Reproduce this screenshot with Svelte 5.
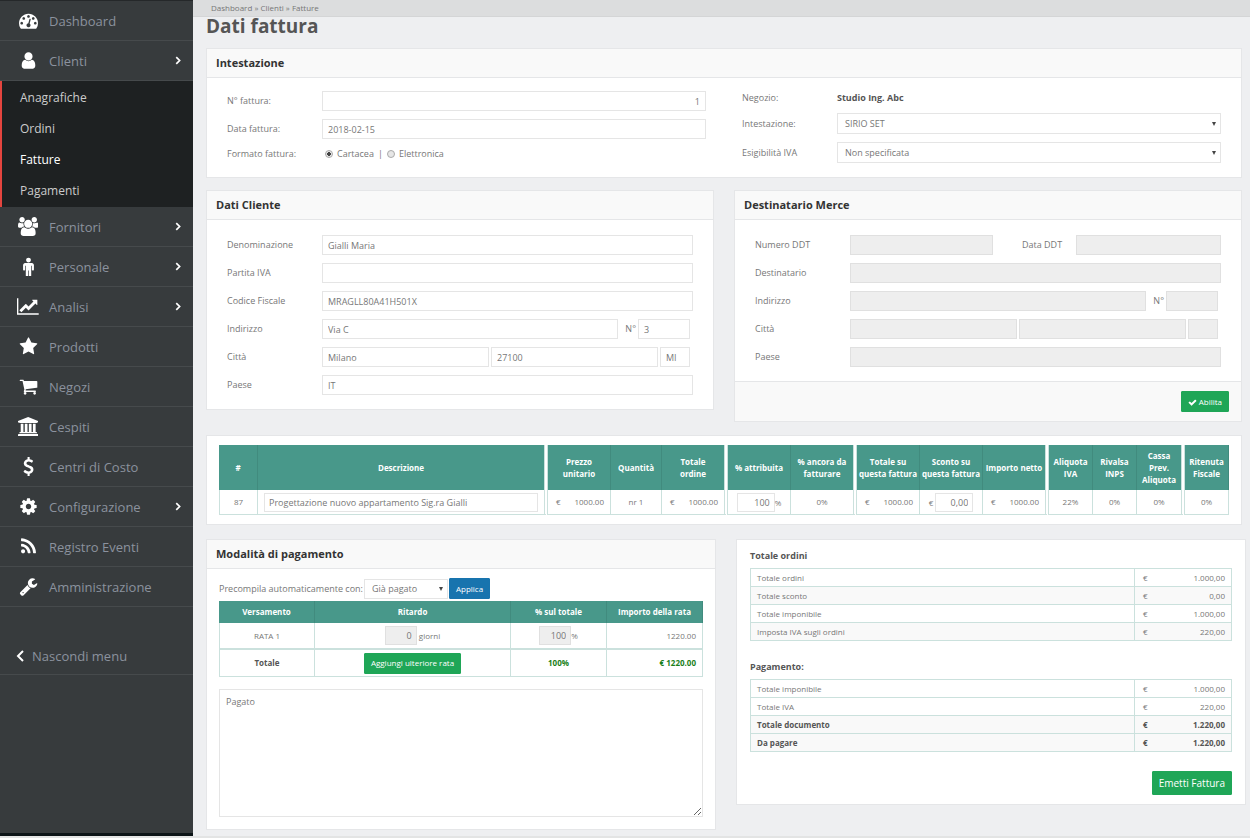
<script lang="ts">
	type Item = { label: string; icon: string; box?: string; children?: string[]; arrow?: boolean };

	const menu: Item[] = [
		{
			label: "Dashboard",
			icon: "M384 1152q0-53-37.5-90.5t-90.5-37.5-90.5 37.5-37.5 90.5 37.5 90.5 90.5 37.5 90.5-37.5 37.5-90.5zm192-448q0-53-37.5-90.5t-90.5-37.5-90.5 37.5-37.5 90.5 37.5 90.5 90.5 37.5 90.5-37.5 37.5-90.5zm428 481l101-382q6-26-7.5-48.5t-38.5-29.5-48 6.5-30 39.5l-101 382q-60 5-107 43.5t-63 98.5q-20 77 20 146t117 89 146-20 89-117q16-60-6-117t-72-91zm660-33q0-53-37.5-90.5t-90.5-37.5-90.5 37.5-37.5 90.5 37.5 90.5 90.5 37.5 90.5-37.5 37.5-90.5zm-640-640q0-53-37.5-90.5t-90.5-37.5-90.5 37.5-37.5 90.5 37.5 90.5 90.5 37.5 90.5-37.5 37.5-90.5zm448 192q0-53-37.5-90.5t-90.5-37.5-90.5 37.5-37.5 90.5 37.5 90.5 90.5 37.5 90.5-37.5 37.5-90.5zm320 448q0 261-141 483-19 29-54 29h-1402q-35 0-54-29-141-221-141-483 0-182 71-348t191-286 286-191 348-71 348 71 286 191 191 286 71 348z",
		},
		{
			label: "Clienti",
			icon: "M1536 1399q0 109-62.5 187t-150.5 78h-854q-88 0-150.5-78t-62.5-187q0-85 8.5-160.5t31.5-152 58.5-131 94-89 134.5-34.5q131 128 313 128t313-128q76 0 134.5 34.5t94 89 58.5 131 31.5 152 8.5 160.5zm-256-887q0 159-112.5 271.5t-271.5 112.5-271.5-112.5-112.5-271.5 112.5-271.5 271.5-112.5 271.5 112.5 112.5 271.5z",
			arrow: true,
			children: ["Anagrafiche", "Ordini", "Fatture", "Pagamenti"],
		},
		{
			label: "Fornitori",
			box: "-64 0 1920 1792",
			icon: "M529 896q-162 5-265 128h-134q-82 0-138-40.5t-56-118.5q0-353 124-353 6 0 43.5 21t97.5 42.5 119 21.5q67 0 133-23-5 37-5 66 0 139 81 256zm1071 637q0 120-73 189.5t-194 69.5h-874q-121 0-194-69.5t-73-189.5q0-53 3.5-103.5t14-109 26.5-108.5 43-97.5 62-81 85.5-53.5 111.5-20q10 0 43 21.5t73 48 107 48 135 21.5 135-21.5 107-48 73-48 43-21.5q61 0 111.5 20t85.5 53.5 62 81 43 97.5 26.5 108.5 14 109 3.5 103.5zm-1024-1277q0 106-75 181t-181 75-181-75-75-181 75-181 181-75 181 75 75 181zm704 384q0 159-112.5 271.5t-271.5 112.5-271.5-112.5-112.5-271.5 112.5-271.5 271.5-112.5 271.5 112.5 112.5 271.5zm576 225q0 78-56 118.5t-138 40.5h-134q-103-123-265-128 81-117 81-256 0-29-5-66 66 23 133 23 59 0 119-21.5t97.5-42.5 43.5-21q124 0 124 353zm-128-609q0 106-75 181t-181 75-181-75-75-181 75-181 181-75 181 75 75 181z",
			arrow: true,
		},
		{
			label: "Personale",
			icon: "M1408 768v416q0 40-28 68t-68 28-68-28-28-68v-352h-64v912q0 46-33 79t-79 33-79-33-33-79v-464h-64v464q0 46-33 79t-79 33-79-33-33-79v-912h-64v352q0 40-28 68t-68 28-68-28-28-68v-416q0-80 56-136t136-56h640q80 0 136 56t56 136zm-288-480q0 93-65.5 158.5t-158.5 65.5-158.5-65.5-65.5-158.5 65.5-158.5 158.5-65.5 158.5 65.5 65.5 158.5z",
			arrow: true,
		},
		{
			label: "Analisi",
			box: "0 0 2048 1792",
			icon: "M2048 1536v128h-2048v-1536h128v1408h1920zm-128-1248v435q0 21-19.5 29.5t-35.5-7.5l-121-121-633 633q-10 10-23 10t-23-10l-233-233-416 416-192-192 585-585q10-10 23-10t23 10l233 233 464-464-121-121q-16-16-7.5-35.5t29.5-19.5h435q14 0 23 9t9 23z",
			arrow: true,
		},
		{
			label: "Prodotti",
			icon: "M1728 647q0 22-26 48l-363 354 86 500q1 7 1 20 0 21-10.5 35.5t-30.5 14.5q-19 0-40-12l-449-236-449 236q-22 12-40 12-21 0-31.5-14.5t-10.5-35.5q0-6 2-20l86-500-364-354q-25-27-25-48 0-37 56-46l502-73 225-455q19-41 49-41t49 41l225 455 502 73q56 9 56 46z",
		},
		{
			label: "Negozi",
			icon: "M704 1536q0 52-38 90t-90 38-90-38-38-90 38-90 90-38 90 38 38 90zm896 0q0 52-38 90t-90 38-90-38-38-90 38-90 90-38 90 38 38 90zm128-1088v512q0 24-16.5 42.5t-40.5 21.5l-1044 122q13 60 13 70 0 16-24 64h920q26 0 45 19t19 45-19 45-45 19h-1024q-26 0-45-19t-19-45q0-11 8-31.5t16-36 21.5-40 15.5-29.5l-177-823h-204q-26 0-45-19t-19-45 19-45 45-19h256q16 0 28.5 6.5t19.5 15.5 13 24.5 8 26 5.5 29.5 4.5 26h1201q26 0 45 19t19 45z",
		},
		{
			label: "Cespiti",
			box: "0 0 1920 1792",
			icon: "M960 0l960 384v128h-128q0 26-20.5 45t-48.5 19h-1526q-28 0-48.5-19t-20.5-45h-128v-128zm-704 640h256v768h128v-768h256v768h128v-768h256v768h128v-768h256v768h59q28 0 48.5 19t20.5 45v64h-1664v-64q0-26 20.5-45t48.5-19h59v-768zm1595 960q28 0 48.5 19t20.5 45v128h-1920v-128q0-26 20.5-45t48.5-19h1782z",
		},
		{
			label: "Centri di Costo",
			icon: "M1362 1185q0 153-99.5 263.5t-258.5 136.5v175q0 14-9 23t-23 9h-135q-13 0-22.5-9.5t-9.5-22.5v-175q-66-9-127.5-31t-101.5-44.5-74-48-46.5-37.5-17.5-18q-17-21-2-41l103-135q7-10 23-12 15-2 24 9l2 2q113 99 243 125 37 8 74 8 81 0 142.5-43t61.5-122q0-28-15-53t-33.5-42-58.5-37.5-66-32-80-32.5q-39-16-61.5-25t-61.5-26.5-62.5-31-56.5-35.5-53.5-42.5-43.5-49-35.5-58-21-66.5-8.5-78q0-138 98-242t255-134v-180q0-13 9.5-22.5t22.5-9.5h135q14 0 23 9t9 23v176q57 6 110.5 23t87 33.5 63.5 37.5 39 29 15 14q17 18 5 38l-81 146q-8 15-23 16-14 3-27-7-3-3-14.5-12t-39-26.5-58.5-32-74.5-26-85.5-11.5q-95 0-155 43t-60 111q0 26 8.5 48t29.5 41.5 39.5 33 56 31 60.5 27 70 27.5q53 20 81 31.5t76 35 75.5 42.5 62 50 53 63.5 31.5 76.5 13 94z",
		},
		{
			label: "Configurazione",
			icon: "M1152 896q0-106-75-181t-181-75-181 75-75 181 75 181 181 75 181-75 75-181zm512-109v222q0 12-8 23t-20 13l-185 28q-19 54-39 91 35 50 107 138 10 12 10 25t-9 23q-27 37-99 108t-94 71q-12 0-26-9l-138-108q-44 23-91 38-16 136-29 186-7 28-36 28h-222q-14 0-24.5-8.5t-11.5-21.5l-28-184q-49-16-90-37l-141 107q-10 9-25 9-14 0-25-11-126-114-165-168-7-10-7-23 0-12 8-23 15-21 51-66.5t54-70.5q-27-50-41-99l-183-27q-13-2-21-12.5t-8-23.5v-222q0-12 8-23t19-13l186-28q14-46 39-92-40-57-107-138-10-12-10-24 0-10 9-23 26-36 98.5-107.5t94.5-71.5q13 0 26 10l138 107q44-23 91-38 16-136 29-186 7-28 36-28h222q14 0 24.5 8.5t11.5 21.5l28 184q49 16 90 37l142-107q9-9 24-9 13 0 25 10 129 119 165 170 7 8 7 22 0 12-8 23-15 21-51 66.5t-54 70.5q26 50 41 98l183 28q13 2 21 12.5t8 23.5z",
			arrow: true,
		},
		{
			label: "Registro Eventi",
			icon: "M576 1344q0 80-56 136t-136 56-136-56-56-136 56-136 136-56 136 56 56 136zm512 123q2 28-17 48-18 21-47 21h-135q-25 0-43-16.5t-20-41.5q-22-229-184.5-391.5t-391.5-184.5q-25-2-41.5-20t-16.5-43v-135q0-29 21-47 17-17 43-17h5q160 13 306 80.5t259 181.5q114 113 181.5 259t80.5 306zm512 2q2 27-18 47-18 20-46 20h-143q-26 0-44.5-17.5t-19.5-42.5q-12-215-101-408.5t-231.5-336-336-231.5-408.5-102q-25-1-42.5-19.5t-17.5-43.5v-143q0-28 20-46 18-18 44-18h3q262 13 501.5 120t425.5 294q187 186 294 425.5t120 501.5z",
		},
		{
			label: "Amministrazione",
			icon: "M448 1472q0-26-19-45t-45-19-45 19-19 45 19 45 45 19 45-19 19-45zm644-420l-682 682q-37 37-90 37-52 0-91-37l-106-108q-38-36-38-90 0-53 38-91l681-681q39 98 114.5 173.5t173.5 114.5zm634-435q0 39-23 106-47 134-164.5 217.5t-258.5 83.5q-185 0-316.5-131.5t-131.5-316.5 131.5-316.5 316.5-131.5q58 0 121.5 16.5t107.5 46.5q16 11 16 28t-16 28l-293 169v224l193 107q5-3 79-48.5t135.5-81 70.5-35.5q15 0 23.5 10t8.5 25z",
		},
	];

	const ordini = [
		["Totale ordini", "1.000,00"],
		["Totale sconto", "0,00"],
		["Totale imponibile", "1.000,00"],
		["Imposta IVA sugli ordini", "220,00"],
	];
	const pagamento = [
		["Totale imponibile", "1.000,00"],
		["Totale IVA", "220,00"],
		["Totale documento", "1.220,00"],
		["Da pagare", "1.220,00"],
	];

	let current = $state("Fatture");
	let formato = $state("cartacea");
	let enabled = $state(false);
	let note = $state("Pagato");
</script>

<div class="page">
	<aside>
		<nav>
			<ul>
				{#each menu as item}
					<li>
						<a class="item" href="#top">
							<span class="icon">
								<svg viewBox={item.box ?? "0 0 1792 1792"} aria-hidden="true"><path d={item.icon} /></svg>
							</span>
							<span class="text">{item.label}</span>
							{#if item.arrow}
								<svg class="arrow" viewBox="0 0 6 8" aria-hidden="true"><path d="M1 1l3 3-3 3" /></svg>
							{/if}
						</a>
						{#if item.children}
							<ul class="sub">
								{#each item.children as child}
									<li>
										<a href="#top" class:active={child === current} onclick={() => (current = child)}>{child}</a>
									</li>
								{/each}
							</ul>
						{/if}
					</li>
				{/each}
			</ul>
		</nav>
		<button class="collapse">
			<svg class="arrow" viewBox="0 0 8 12" aria-hidden="true"><path d="M7 1L2 6l5 5" /></svg>
			Nascondi menu
		</button>
	</aside>

	<div class="content">
		<div class="breadcrumb">
			<a href="#top">Dashboard</a> » <a href="#top">Clienti</a> » <a href="#top">Fatture</a>
		</div>
		<main>
			<h1>Dati fattura</h1>

			<section class="panel">
				<h2>Intestazione</h2>
				<div class="head-form">
					<div class="fields">
						<div class="field">
							<label for="numero">N° fattura:</label>
							<input id="numero" class="right" value="1" />
						</div>
						<div class="field">
							<label for="data">Data fattura:</label>
							<input id="data" value="2018-02-15" />
						</div>
						<div class="field short">
							<span class="label">Formato fattura:</span>
							<div class="radios">
								<label><input type="radio" value="cartacea" bind:group={formato} /> Cartacea</label>
								<span>|</span>
								<label><input type="radio" value="elettronica" bind:group={formato} /> Elettronica</label>
							</div>
						</div>
					</div>
					<div class="fields">
						<div class="field short">
							<span class="label">Negozio:</span>
							<strong>Studio Ing. Abc</strong>
						</div>
						<div class="field">
							<label for="intestazione">Intestazione:</label>
							<select id="intestazione"><option>SIRIO SET</option></select>
						</div>
						<div class="field">
							<label for="iva">Esigibilità IVA</label>
							<select id="iva"><option>Non specificata</option></select>
						</div>
					</div>
				</div>
			</section>

			<div class="columns">
				<section class="panel">
					<h2>Dati Cliente</h2>
					<div class="fields body">
						<div class="field">
							<label for="c-nome">Denominazione</label>
							<input id="c-nome" value="Gialli Maria" />
						</div>
						<div class="field">
							<label for="c-piva">Partita IVA</label>
							<input id="c-piva" />
						</div>
						<div class="field">
							<label for="c-cf">Codice Fiscale</label>
							<input id="c-cf" value="MRAGLL80A41H501X" />
						</div>
						<div class="field">
							<label for="c-via">Indirizzo</label>
							<div class="split">
								<input id="c-via" value="Via C" />
								<label class="num" for="c-num">N°</label>
								<input id="c-num" class="civic" value="3" />
							</div>
						</div>
						<div class="field">
							<label for="c-citta">Città</label>
							<div class="split">
								<input id="c-citta" value="Milano" />
								<input aria-label="CAP" value="27100" />
								<input aria-label="Provincia" class="prov" value="MI" />
							</div>
						</div>
						<div class="field">
							<label for="c-paese">Paese</label>
							<input id="c-paese" value="IT" />
						</div>
					</div>
				</section>

				<section class="panel">
					<h2>Destinatario Merce</h2>
					<div class="fields body">
						<div class="field">
							<label for="d-ddt">Numero DDT</label>
							<div class="ddt">
								<input id="d-ddt" disabled={!enabled} />
								<label for="d-data">Data DDT</label>
								<input id="d-data" disabled={!enabled} />
							</div>
						</div>
						<div class="field">
							<label for="d-nome">Destinatario</label>
							<input id="d-nome" disabled={!enabled} />
						</div>
						<div class="field">
							<label for="d-via">Indirizzo</label>
							<div class="split">
								<input id="d-via" disabled={!enabled} />
								<label class="num" for="d-num">N°</label>
								<input id="d-num" class="civic" disabled={!enabled} />
							</div>
						</div>
						<div class="field">
							<label for="d-citta">Città</label>
							<div class="split">
								<input id="d-citta" disabled={!enabled} />
								<input aria-label="CAP" disabled={!enabled} />
								<input aria-label="Provincia" class="prov" disabled={!enabled} />
							</div>
						</div>
						<div class="field">
							<label for="d-paese">Paese</label>
							<input id="d-paese" disabled={!enabled} />
						</div>
					</div>
					<footer>
						<button class="green" onclick={() => (enabled = true)}>
							<svg viewBox="0 0 1792 1792" aria-hidden="true"><path d="M1671 566q0 40-28 68l-724 724-136 136q-28 28-68 28t-68-28l-136-136-362-362q-28-28-28-68t28-68l136-136q28-28 68-28t68 28l294 295 656-657q28-28 68-28t68 28l136 136q28 28 28 68z" /></svg>
							Abilita
						</button>
					</footer>
				</section>
			</div>

			<section class="panel lines">
				<table class="grid">
					<colgroup>
						<col class="w-id" />
						<col />
						<col class="w-md" />
						<col class="w-qty" />
						<col class="w-lg" />
						<col class="w-md" />
						<col class="w-lg" />
						<col class="w-md" />
						<col class="w-md" />
						<col class="w-lg" />
						<col class="w-sm" />
						<col class="w-sm" />
						<col class="w-cassa" />
						<col class="w-sm" />
					</colgroup>
					<thead>
						<tr>
							<th>#</th>
							<th class="end">Descrizione</th>
							<th>Prezzo<br />unitario</th>
							<th>Quantità</th>
							<th class="end">Totale<br />ordine</th>
							<th>% attribuita</th>
							<th class="end">% ancora da<br />fatturare</th>
							<th>Totale su<br />questa fattura</th>
							<th>Sconto su<br />questa fattura</th>
							<th class="end">Importo netto</th>
							<th>Aliquota<br />IVA</th>
							<th>Rivalsa<br />INPS</th>
							<th class="end">Cassa<br />Prev.<br />Aliquota</th>
							<th>Ritenuta<br />Fiscale</th>
						</tr>
					</thead>
					<tbody>
						<tr>
							<td>87</td>
							<td class="end desc"><input aria-label="Descrizione" value="Progettazione nuovo appartamento Sig.ra Gialli" /></td>
							<td><div class="money"><span>€</span><span>1000.00</span></div></td>
							<td>nr 1</td>
							<td class="end"><div class="money"><span>€</span><span>1000.00</span></div></td>
							<td><input aria-label="% attribuita" class="cell right" value="100" />%</td>
							<td class="end">0%</td>
							<td><div class="money"><span>€</span><span>1000.00</span></div></td>
							<td>€ <input aria-label="Sconto" class="cell right" value="0,00" /></td>
							<td class="end"><div class="money"><span>€</span><span>1000.00</span></div></td>
							<td>22%</td>
							<td>0%</td>
							<td class="end">0%</td>
							<td>0%</td>
						</tr>
					</tbody>
				</table>
			</section>

			<div class="columns wide">
				<section class="panel">
					<h2>Modalità di pagamento</h2>
					<div class="payment">
						<div class="preset">
							<label for="preset">Precompila automaticamente con:</label>
							<select id="preset"><option>Già pagato</option></select>
							<button class="blue">Applica</button>
						</div>
						<table class="grid rate">
							<colgroup>
								<col class="w-rate" />
								<col />
								<col class="w-rate" />
								<col class="w-rate" />
							</colgroup>
							<thead>
								<tr>
									<th>Versamento</th>
									<th>Ritardo</th>
									<th>% sul totale</th>
									<th>Importo della rata</th>
								</tr>
							</thead>
							<tbody>
								<tr>
									<td>RATA 1</td>
									<td><input aria-label="Ritardo in giorni" class="cell delay right" value="0" disabled /> giorni</td>
									<td><input aria-label="% sul totale" class="cell delay right" value="100" disabled />%</td>
									<td class="amount">1220.00</td>
								</tr>
								<tr class="total">
									<td>Totale</td>
									<td><button class="green">Aggiungi ulteriore rata</button></td>
									<td class="ok">100%</td>
									<td class="ok amount">€ 1220.00</td>
								</tr>
							</tbody>
						</table>
						<textarea aria-label="Note" bind:value={note}></textarea>
					</div>
				</section>

				<section class="panel summary">
					<h3>Totale ordini</h3>
					<table>
						<tbody>
							{#each ordini as [label, value], i}
								<tr class:odd={i % 2 === 1}>
									<td>{label}</td>
									<td class="sum"><div class="money"><span>€</span><span>{value}</span></div></td>
								</tr>
							{/each}
						</tbody>
					</table>
					<h3>Pagamento:</h3>
					<table>
						<tbody>
							{#each pagamento as [label, value], i}
								<tr class:odd={i > 1} class:bold={i > 1}>
									<td>{label}</td>
									<td class="sum"><div class="money"><span>€</span><span>{value}</span></div></td>
								</tr>
							{/each}
						</tbody>
					</table>
					<button class="green emit">Emetti Fattura</button>
				</section>
			</div>
		</main>
	</div>
</div>

<style>
	:global(body) {
		margin: 0;
		background: #eeeff1;
	}

	* {
		box-sizing: border-box;
	}

	.page {
		display: flex;
		min-height: 100vh;
		border-bottom: 3px solid #e3e4e4;
		font-family: "Open Sans", sans-serif;
		font-size: 9px;
		line-height: 12px;
		color: #777;
	}

	a {
		color: inherit;
		text-decoration: none;
	}

	/* sidebar */
	aside {
		flex: none;
		width: 193px;
		background: #373b3d;
		border-top: 1px solid #25282a;
		border-bottom: 3px solid #0c1417;
	}

	ul {
		list-style: none;
		margin: 0;
		padding: 0;
	}

	.item {
		display: flex;
		align-items: center;
		height: 40px;
		padding: 0 11px 0 16px;
		border-bottom: 1px solid #464a4c;
		font-size: 13px;
		line-height: 18px;
		color: #8b929e;
	}

	.icon {
		display: flex;
		justify-content: center;
		width: 24px;
		margin-right: 9px;
	}

	.icon svg {
		height: 19px;
		fill: #fff;
	}

	.text {
		flex: 1;
	}

	.arrow {
		width: 7px;
		height: 9px;
		fill: none;
		stroke: #fff;
		stroke-width: 1.5;
	}

	.sub {
		padding: 1px 0;
		background: #1e2122;
		border-left: 2px solid #e4453f;
	}

	.sub a {
		display: block;
		padding: 0 18px;
		font-size: 12px;
		line-height: 31px;
		color: #ccc;
	}

	.sub a.active {
		color: #fff;
	}

	.collapse {
		display: flex;
		align-items: center;
		gap: 8px;
		width: 100%;
		height: 38px;
		margin-top: 30px;
		padding: 0 16px;
		border: 0;
		border-bottom: 1px solid #464a4c;
		background: none;
		font-size: 13px;
		color: #8b929e;
	}

	.collapse .arrow {
		width: 8px;
		height: 12px;
		stroke-width: 2;
	}

	/* content */
	.content {
		flex: 1;
		min-width: 0;
	}

	.breadcrumb {
		height: 17px;
		padding: 0 18px;
		background: #dcddde;
		border-bottom: 1px solid #d4d5d6;
		font-size: 8px;
		line-height: 16px;
	}

	main {
		padding: 0 8px 6px 13px;
	}

	h1 {
		margin: 0 0 12px;
		font-size: 19px;
		line-height: 19px;
		color: #555;
	}

	.panel {
		background: #fff;
		border: 1px solid #e5e6e8;
	}

	h2 {
		margin: 0;
		padding: 0 9px;
		background: #f9f9f9;
		border-bottom: 1px solid #e5e6e8;
		font-size: 11px;
		line-height: 28px;
		color: #333;
	}

	.head-form {
		display: grid;
		grid-template-columns: 1fr 1fr;
		gap: 36px;
		padding: 13px 20px 14px;
	}

	.fields {
		display: flex;
		flex-direction: column;
		gap: 8px;
	}

	.body {
		padding: 15px 20px 14px;
	}

	.field {
		display: grid;
		grid-template-columns: 95px 1fr;
		align-items: center;
		min-height: 20px;
	}

	.short {
		min-height: 14px;
	}

	strong {
		color: #555;
	}

	input,
	select,
	button,
	textarea {
		font-family: inherit;
	}

	input,
	select,
	textarea {
		min-width: 0;
		width: 100%;
		height: 20px;
		padding: 0 5px;
		border: 1px solid #e5e5e5;
		border-radius: 0;
		background: #fff;
		font-size: 9px;
		color: #777;
	}

	input:disabled {
		background: #eee;
		border-color: #e0e0e0;
	}

	select {
		height: 21px;
		padding: 0 7px;
		appearance: none;
		background: #fff url("data:image/svg+xml,%3Csvg xmlns='http://www.w3.org/2000/svg' viewBox='0 0 4 4'%3E%3Cpath d='M0 0h4L2 4z' fill='%23444'/%3E%3C/svg%3E") no-repeat right 4px center / 4px 4px;
	}

	.right {
		text-align: right;
	}

	.radios {
		display: flex;
		align-items: center;
		gap: 4px;
		padding-left: 3px;
	}

	.radios label {
		display: flex;
		align-items: center;
		gap: 4px;
	}

	input[type="radio"] {
		appearance: none;
		width: 8px;
		height: 8px;
		margin: 0;
		padding: 0;
		border: 1px solid #aaa;
		border-radius: 50%;
		background: #e6e6e6;
	}

	input[type="radio"]:checked {
		background: radial-gradient(#444 40%, #e6e6e6 50%);
	}

	.columns {
		display: grid;
		grid-template-columns: 1fr 1fr;
		align-items: start;
		gap: 20px;
		margin-top: 12px;
	}

	.split {
		display: flex;
		align-items: center;
		gap: 2px;
		padding-right: 3px;
	}

	.split input {
		flex: 1;
	}

	.split .civic {
		flex: none;
		width: 52px;
	}

	.split .prov {
		flex: none;
		width: 30px;
	}

	.num {
		padding-left: 5px;
	}

	.ddt {
		display: grid;
		grid-template-columns: 143px 1fr 145px;
		align-items: center;
	}

	.ddt label {
		padding-left: 29px;
	}

	footer {
		display: flex;
		justify-content: flex-end;
		padding: 9px 12px;
		background: #f9f9f9;
		border-top: 1px solid #e5e6e8;
	}

	.green,
	.blue {
		height: 21px;
		padding: 0 6px;
		border: 1px solid #1fa657;
		border-radius: 1px;
		background: #1fa657;
		font-size: 8px;
		line-height: 12px;
		color: #fff;
	}

	.blue {
		border-color: #1874ae;
		background: #1874ae;
	}

	.green svg {
		width: 9px;
		height: 9px;
		vertical-align: -2px;
		fill: #fff;
	}

	/* tables */
	table {
		width: 100%;
		border-spacing: 0;
		font-size: 8px;
		line-height: 12px;
	}

	.lines {
		margin-top: 13px;
		padding: 9px 12px;
	}

	.grid {
		table-layout: fixed;
	}

	th,
	td {
		padding: 0;
	}

	.grid th {
		height: 45px;
		background: #48988a;
		background-clip: padding-box;
		border-right: 1px solid #418b7e;
		color: #fff;
	}

	.grid td {
		height: 25px;
		border-right: 1px solid #cbe1dd;
		border-bottom: 1px solid #cbe1dd;
		text-align: center;
	}

	.grid td:first-child {
		border-left: 1px solid #cbe1dd;
	}

	.grid .end {
		border-right: 4px double #cbe1dd;
	}

	.w-id {
		width: 39px;
	}

	.w-sm {
		width: 44px;
	}

	.w-cassa {
		width: 48px;
	}

	.w-qty {
		width: 51px;
	}

	.w-md {
		width: 63px;
	}

	.w-lg {
		width: 66px;
	}

	.w-rate {
		width: 96px;
	}

	.grid .desc {
		padding: 0 6px;
	}

	.desc input {
		height: 19px;
		padding: 0 4px;
	}

	.cell {
		width: 38px;
		height: 19px;
		padding: 0 4px;
	}

	.money {
		display: flex;
		justify-content: space-between;
		padding: 0 6px 0 8px;
	}

	.columns.wide {
		margin-top: 14px;
		margin-right: -4px;
	}

	.payment {
		padding: 9px 12px 12px;
	}

	.preset {
		display: flex;
		align-items: center;
		gap: 1px;
		margin-bottom: 2px;
	}

	.preset select {
		width: 84px;
		height: 20px;
	}

	.rate th {
		height: 22px;
	}

	.rate td {
		height: 26px;
	}

	.rate .delay {
		width: 32px;
	}

	.rate .amount {
		padding-right: 6px;
		text-align: right;
	}

	.rate .total td {
		height: 28px;
		border-top: 1px solid #cbe1dd;
		font-weight: bold;
		color: #555;
	}

	.rate .total .ok {
		color: #1a7f1a;
	}

	textarea {
		display: block;
		height: 128px;
		margin-top: 12px;
		padding: 6px;
		line-height: 12px;
	}

	.summary {
		padding: 9px 13px;
	}

	h3 {
		margin: 0 0 6px;
		font-size: 9px;
		line-height: 13px;
		color: #555;
	}

	.summary table {
		margin-bottom: 19px;
		border: 1px solid #cbe1dd;
		border-bottom: 0;
	}

	.summary td {
		height: 18px;
		padding-left: 6px;
		border-bottom: 1px solid #cbe1dd;
	}

	.summary .sum {
		width: 97px;
		padding: 0;
		border-left: 1px solid #cbe1dd;
	}

	.odd {
		background: #f9f9f9;
	}

	.bold {
		font-weight: bold;
		color: #555;
	}

	.emit {
		display: block;
		height: 24px;
		margin-left: auto;
		font-size: 10px;
	}
</style>
